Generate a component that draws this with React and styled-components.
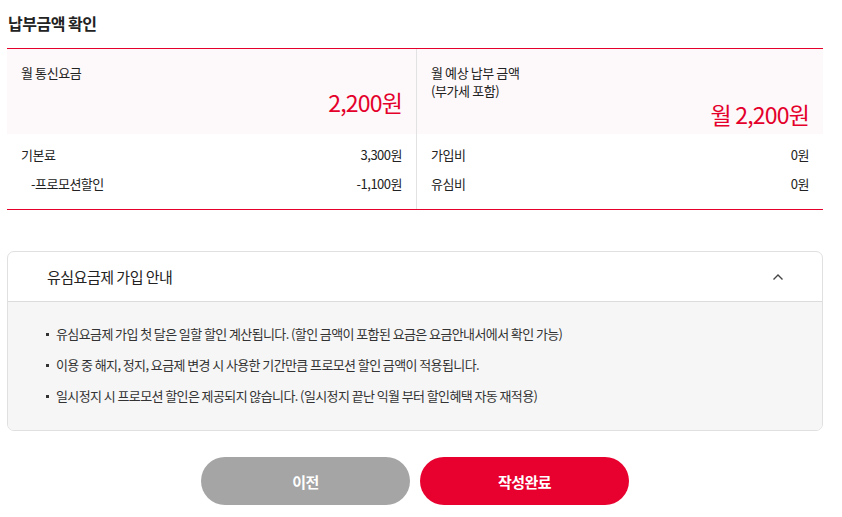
import React from "react";
import styled, { createGlobalStyle } from "styled-components";

const GlobalStyle = createGlobalStyle`
  body {
    margin: 0;
    background: #fff;
    font-family: "Noto Sans CJK KR", "Noto Sans", sans-serif;
    color: #222;
  }
`;

const Page = styled.div`
  width: 816px;
  padding: 0 0 0 7px;
`;

const Title = styled.h2`
  margin: 0;
  padding: 11px 0 0 1px;
  height: 48px;
  box-sizing: border-box;
  font-size: 16px;
  font-weight: 700;
  letter-spacing: -0.5px;
  line-height: 24px;
`;

const Summary = styled.div`
  display: grid;
  grid-template-columns: 409px 1fr;
  border-top: 1px solid #e4002b;
  border-bottom: 1px solid #e4002b;
`;

const Panel = styled.div`
  display: flex;
  flex-direction: column;
  border-left: ${(p) => (p.$divider ? "1px solid #e2e2e2" : "none")};
`;

const Head = styled.div`
  height: 85px;
  background: #fdf8f9;
  padding: 15px 14px 0 14px;
  box-sizing: border-box;
  display: flex;
  flex-direction: column;
`;

const HeadLabel = styled.div`
  font-size: 13px;
  line-height: 18px;
  letter-spacing: -0.4px;
`;

const Amount = styled.div`
  margin-top: auto;
  margin-bottom: 18px;
  text-align: right;
  color: #e4002b;
  font-size: 23px;
  line-height: 28px;
  letter-spacing: -0.8px;
`;

const Rows = styled.div`
  padding: 6px 14px 11px 14px;
`;

const Row = styled.div`
  display: flex;
  justify-content: space-between;
  height: 29px;
  align-items: center;
  font-size: 13px;
  letter-spacing: -0.5px;
  padding-left: ${(p) => (p.$indent ? "10px" : "0")};
`;

const Accordion = styled.div`
  margin-top: 41px;
  border: 1px solid #e0e0e0;
  border-radius: 7px;
  overflow: hidden;
`;

const AccHeader = styled.div`
  height: 49px;
  display: flex;
  align-items: center;
  justify-content: space-between;
  padding: 0 38px 0 39px;
  border-bottom: 1px solid #dcdcdc;
  font-size: 15px;
  letter-spacing: -0.5px;
`;

const AccBody = styled.ul`
  margin: 0;
  list-style: none;
  background: #f6f6f6;
  padding: 16px 0 19px 37px;
`;

const Item = styled.li`
  position: relative;
  padding-left: 11px;
  height: 31px;
  line-height: 31px;
  font-size: 13px;
  letter-spacing: -0.6px;
  color: #333;

  &::before {
    content: "";
    position: absolute;
    left: 1px;
    top: 15px;
    width: 3px;
    height: 3px;
    background: #333;
  }
`;

const Buttons = styled.div`
  display: flex;
  justify-content: center;
  gap: 10px;
  margin-top: 26px;
`;

const Button = styled.button`
  width: 209px;
  height: 48px;
  border: none;
  border-radius: 24px;
  background: ${(p) => (p.$primary ? "#e8002f" : "#a5a5a5")};
  color: #fff;
  font-family: inherit;
  font-size: 15px;
  font-weight: 700;
  letter-spacing: -0.5px;
`;

export default function App() {
  return (
    <Page>
      <GlobalStyle />
      <Title>납부금액 확인</Title>
      <Summary>
        <Panel>
          <Head>
            <HeadLabel>월 통신요금</HeadLabel>
            <Amount>2,200원</Amount>
          </Head>
          <Rows>
            <Row>
              <span>기본료</span>
              <span>3,300원</span>
            </Row>
            <Row $indent>
              <span>-프로모션할인</span>
              <span>-1,100원</span>
            </Row>
          </Rows>
        </Panel>
        <Panel $divider>
          <Head>
            <HeadLabel>
              월 예상 납부 금액
              <br />
              (부가세 포함)
            </HeadLabel>
            <Amount>월 2,200원</Amount>
          </Head>
          <Rows>
            <Row>
              <span>가입비</span>
              <span>0원</span>
            </Row>
            <Row>
              <span>유심비</span>
              <span>0원</span>
            </Row>
          </Rows>
        </Panel>
      </Summary>

      <Accordion>
        <AccHeader>
          <span>유심요금제 가입 안내</span>
          <svg width="12" height="8" viewBox="0 0 12 8">
            <path d="M1.5 6.5 L6 2 L10.5 6.5" fill="none" stroke="#444" strokeWidth="1.4" />
          </svg>
        </AccHeader>
        <AccBody>
          <Item>유심요금제 가입 첫 달은 일할 할인 계산됩니다. (할인 금액이 포함된 요금은 요금안내서에서 확인 가능)</Item>
          <Item>이용 중 해지, 정지, 요금제 변경 시 사용한 기간만큼 프로모션 할인 금액이 적용됩니다.</Item>
          <Item>일시정지 시 프로모션 할인은 제공되지 않습니다. (일시정지 끝난 익월 부터 할인혜택 자동 재적용)</Item>
        </AccBody>
      </Accordion>

      <Buttons>
        <Button>이전</Button>
        <Button $primary>작성완료</Button>
      </Buttons>
    </Page>
  );
}
